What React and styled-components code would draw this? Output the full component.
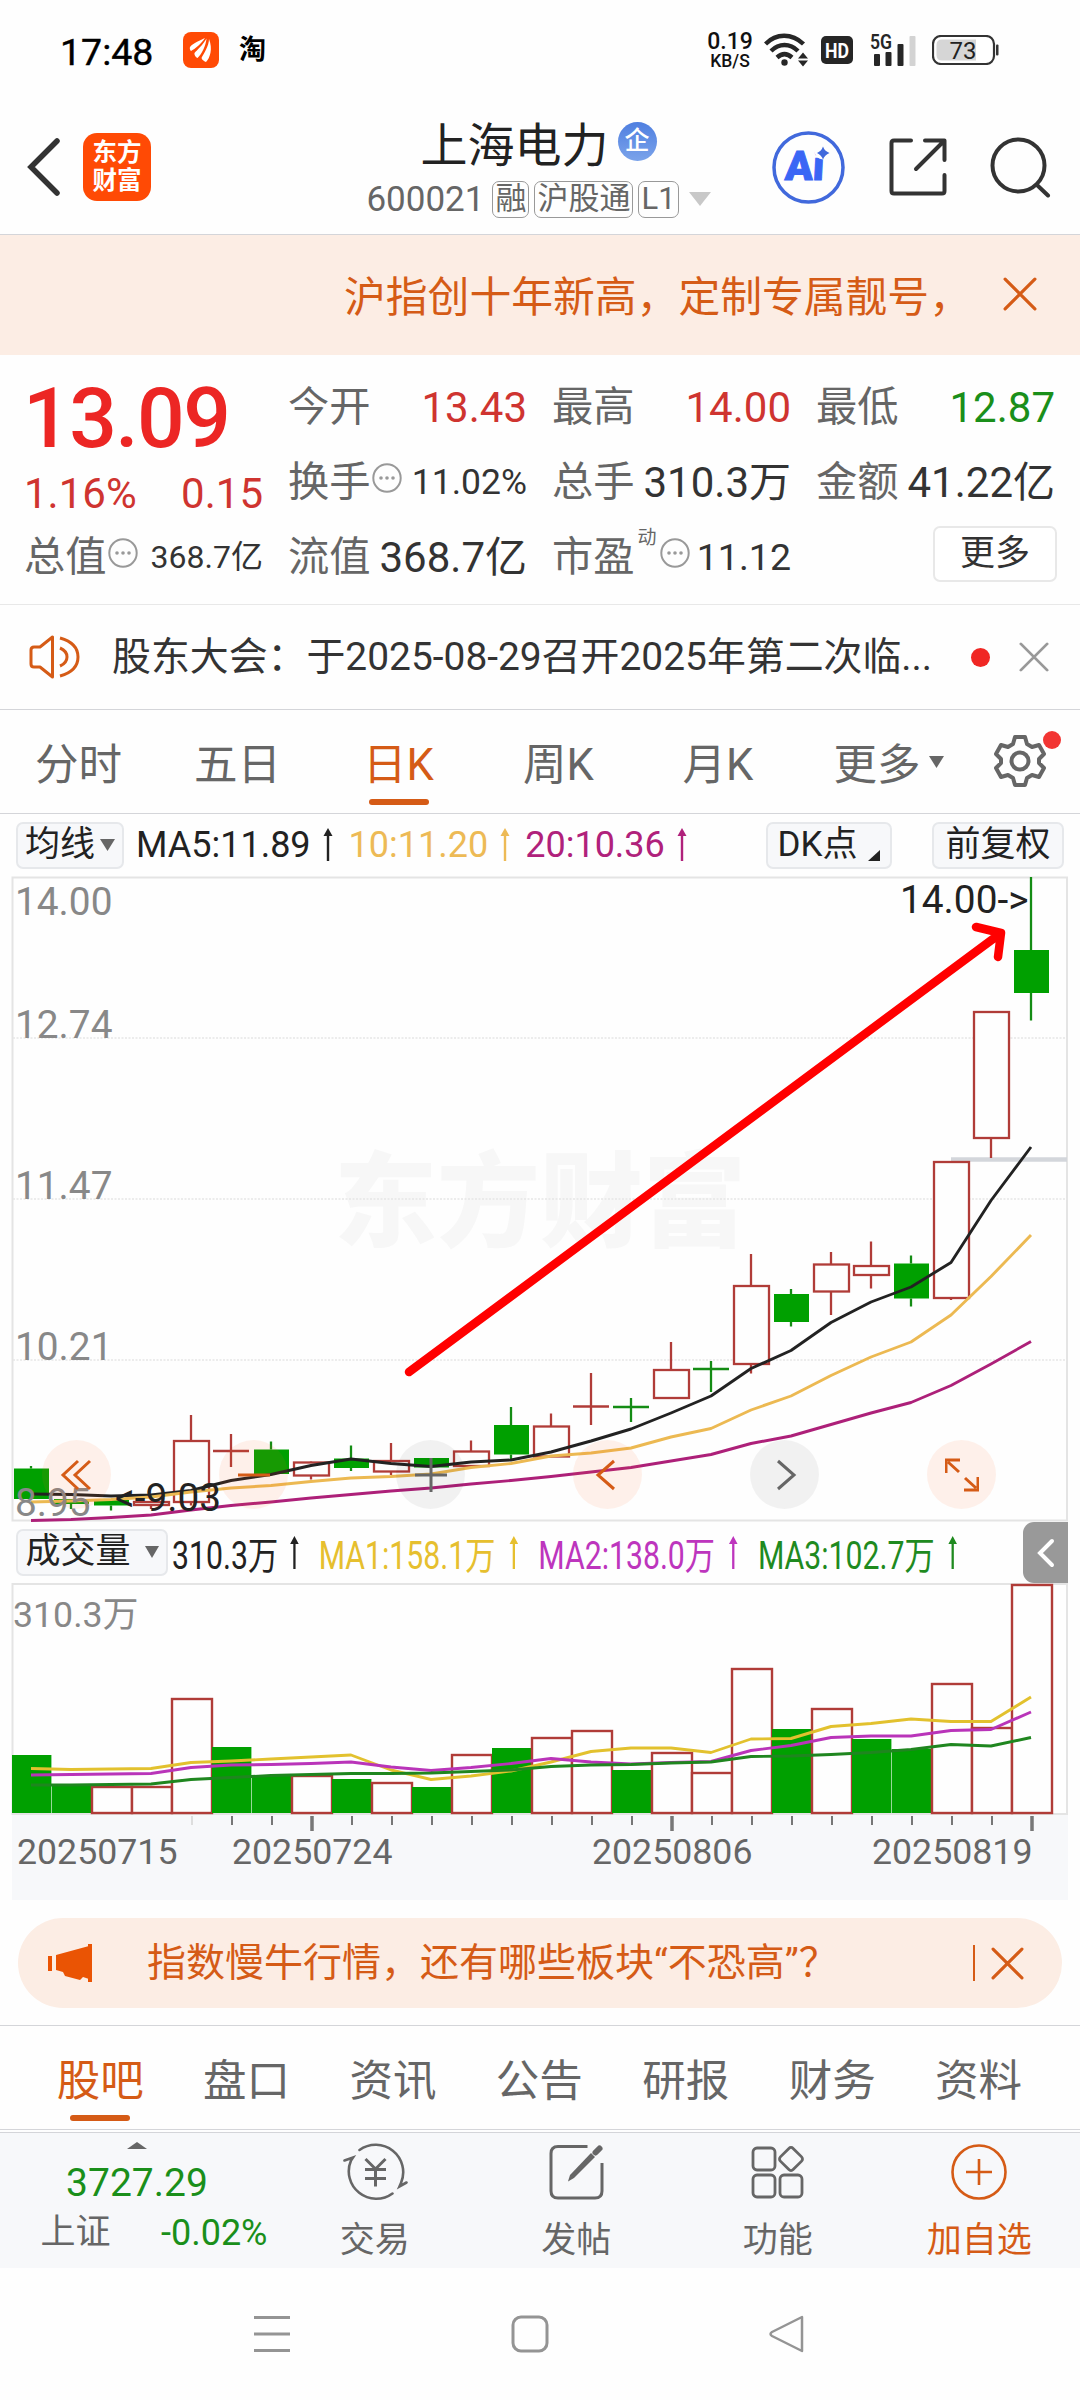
import React from 'react';
import styled, { createGlobalStyle, css } from 'styled-components';

const GlobalStyle = createGlobalStyle`
  * {
    box-sizing: border-box;
  }
  body {
    margin: 0;
    background: #fefefe;
    font-family: Roboto, 'Noto Sans CJK SC', sans-serif;
    color: #333;
    -webkit-font-smoothing: antialiased;
  }
  svg {
    display: block;
    flex: none;
  }
`;

const colors = {
  orange: '#d55b16',
  red: '#cf3430',
  green: '#1a8f1a',
  fill: '#00a000',
  border: '#b03c38',
  grey: '#666',
  dark: '#333',
  peach: '#fcede4',
  panel: '#f7f8fa',
  line: '#d4d5d9'
};

const Page = styled.main`
  width: 1080px;
  height: 2400px;
  display: flex;
  flex-direction: column;
  overflow: hidden;
`;

/* status bar */

const StatusBar = styled.div`
  height: 100px;
  padding: 0 81px 0 60px;
  display: flex;
  align-items: center;
`;

const Clock = styled.span`
  width: 123px;
  font-size: 37.5px;
  line-height: 40px;
  padding-top: 3px;
  font-weight: 400;
  color: #000;
  -webkit-text-stroke: 0.4px #000;
`;

const TaoMark = styled.span`
  margin-left: 20px;
  margin-right: auto;
  font-size: 27px;
  line-height: 36px;
  font-weight: 700;
  color: #000;
`;

const NetSpeed = styled.div`
  display: flex;
  flex-direction: column;
  align-items: center;
  width: 46px;
  margin-right: 11px;
  padding-top: 2px;
  color: #111;
  font-weight: 500;
  font-size: 23px;
  line-height: 20px;
  > small {
    font-size: 17.5px;
    line-height: 18px;
  }
`;

/* header */

const Header = styled.header`
  height: 135px;
  padding: 0 29px 0 26px;
  display: grid;
  grid-template-columns: 1fr auto 1fr;
  align-items: center;
  border-bottom: 1px solid ${colors.line};
`;

const HeaderLeft = styled.div`
  display: flex;
  align-items: center;
  gap: 23px;
`;

const HeaderRight = styled.div`
  display: flex;
  align-items: center;
  justify-content: flex-end;
  gap: 43.5px;
`;

const BrandLogo = styled.div`
  width: 68px;
  height: 68px;
  border-radius: 14px;
  background: #ff4a05;
  color: #fff;
  font-size: 24.5px;
  line-height: 28px;
  font-weight: 700;
  display: flex;
  flex-direction: column;
  align-items: center;
  justify-content: center;
`;

const TitleBlock = styled.div`
  padding-top: 8px;
  display: flex;
  flex-direction: column;
  align-items: center;
`;

const Title = styled.h1`
  margin: 0;
  height: 56px;
  display: flex;
  align-items: center;
  gap: 9px;
  font-size: 47px;
  font-weight: 400;
  color: #222;
`;

const Badge = styled.span`
  width: 39px;
  height: 39px;
  border-radius: 50%;
  background: linear-gradient(#4f7fe0, #7ba3ea);
  color: #fff;
  font-size: 25px;
  line-height: 37px;
  font-weight: 500;
  text-align: center;
`;

const SubTitle = styled.div`
  height: 60px;
  display: flex;
  align-items: center;
  gap: 5px;
  font-size: 35px;
  color: ${colors.grey};
  > svg {
    margin-left: 5px;
  }
`;

const Tag = styled.span`
  height: 37px;
  padding: 0 2px;
  border: 1.5px solid #999;
  border-radius: 7px;
  font-size: 31px;
  line-height: 33px;
  &:first-of-type {
    margin-left: 3px;
  }
`;

/* promo strips */

const Promo = styled.div`
  height: 120px;
  padding: 0 43px 2px 344px;
  display: flex;
  align-items: center;
  justify-content: space-between;
  background: ${colors.peach};
  color: ${colors.orange};
  font-size: 41.8px;
  white-space: nowrap;
`;

const PromoText = styled.span`
  width: 630px;
`;

const PillPromo = styled.div`
  height: 90px;
  margin: 17px 18px 17px;
  padding: 0 38px 0 29px;
  display: flex;
  align-items: center;
  border-radius: 45px;
  background: ${colors.peach};
  color: ${colors.orange};
  font-size: 39px;
  white-space: nowrap;
`;

const PillText = styled.span`
  flex: 1;
  margin-left: 53px;
  line-height: 50px;
`;

const PillDivider = styled.span`
  width: 2px;
  height: 36px;
  margin-right: 16px;
  background: ${colors.orange};
`;

/* quote */

const Quote = styled.section`
  height: 250px;
  padding: 15px 25px 0 24px;
  display: grid;
  grid-template-columns: repeat(4, 239px);
  grid-template-rows: 75px 75px 75px;
  column-gap: 25px;
  border-bottom: 1px solid #e8e8e8;
`;

const PriceBlock = styled.div`
  grid-row: 1 / span 2;
  padding-top: 1px;
  display: flex;
  flex-direction: column;
`;

const Price = styled.strong`
  height: 96px;
  margin-left: -1px;
  font-size: 84px;
  line-height: 96px;
  font-weight: 500;
  letter-spacing: -1.6px;
  color: #ec2624;
`;

const PriceChange = styled.div`
  display: flex;
  justify-content: space-between;
  font-size: 42px;
  line-height: 54px;
  color: ${colors.red};
`;

const Metric = styled.div`
  display: flex;
  align-items: center;
  height: 75px;
  font-size: 41.3px;
  line-height: 75px;
  white-space: nowrap;
  color: ${colors.grey};
  > svg {
    margin: 0 0 9px 1px;
  }
`;

const MetricValue = styled.span`
  margin-left: auto;
  font-size: ${({ $size }) => $size || 42}px;
  color: ${({ $color }) => $color || colors.dark};
`;

const Dynamic = styled.sup`
  align-self: flex-start;
  width: 19px;
  margin: 6px 2px 0 3px;
  font-size: 19px;
  line-height: 24px;
`;

const MoreButton = styled.button`
  justify-self: end;
  align-self: center;
  width: 124px;
  height: 56px;
  margin: 0 -2px 7px 0;
  padding: 0 0 1px;
  border: 2px solid #e8e8e8;
  border-radius: 7px;
  background: #fff;
  color: ${colors.dark};
  font: inherit;
  font-size: 35px;
  line-height: 48px;
`;

/* notice */

const Notice = styled.section`
  height: 105px;
  padding: 0 31px 0 29px;
  display: flex;
  align-items: center;
  border-bottom: 1px solid ${colors.line};
  font-size: 38.9px;
`;

const NoticeText = styled.span`
  width: 860px;
  margin-left: 31px;
  line-height: 60px;
  white-space: nowrap;
`;

const RedDot = styled.i`
  width: 19px;
  height: 19px;
  margin-right: 29px;
  border-radius: 50%;
  background: #f02724;
`;

/* tabs */

const PeriodTabs = styled.nav`
  height: 104px;
  display: flex;
  border-bottom: 1px solid ${colors.line};
`;

const InfoTabs = styled.nav`
  height: 105px;
  padding: 0 27px 0 27px;
  display: flex;
  border-top: 1px solid ${colors.line};
  border-bottom: 1px solid ${colors.line};
`;

const Tab = styled.a`
  position: relative;
  width: ${({ $width }) => $width}px;
  display: flex;
  align-items: center;
  justify-content: center;
  gap: 8px;
  font-size: 43.5px;
  color: ${colors.grey};
  ${({ $active }) =>
    $active &&
    css`
      color: ${colors.orange};
      &::after {
        content: '';
        position: absolute;
        bottom: 8px;
        width: 60px;
        height: 6px;
        border-radius: 3px;
        background: ${colors.orange};
      }
    `}
`;

const GearButton = styled.div`
  position: relative;
  margin-left: 14px;
  padding-top: 24px;
`;

const GearDot = styled.i`
  position: absolute;
  top: 21px;
  right: -14px;
  width: 18px;
  height: 18px;
  border-radius: 50%;
  background: #f23533;
`;

/* charts */

const Toolbar = styled.div`
  height: ${({ $height }) => $height}px;
  padding-left: 16px;
  padding-right: ${({ $right }) => $right}px;
  display: flex;
  align-items: center;
  font-size: 35px;
  white-space: nowrap;
`;

const Chip = styled.button`
  flex: none;
  width: ${({ $width }) => $width}px;
  height: 47px;
  padding: 0 0 1px;
  display: flex;
  align-items: center;
  justify-content: center;
  gap: ${({ $gap }) => $gap || 0}px;
  border: 2px solid #e6e8eb;
  border-radius: 7px;
  background: ${colors.panel};
  color: #222;
  font: inherit;
  line-height: 40px;
  & + & {
    margin-left: 40px;
  }
`;

const MaLegend = styled.div`
  flex: 1;
  margin-left: 12px;
  display: flex;
  align-items: center;
  font-size: 36px;
`;

const VolumeLegend = styled.div`
  flex: 1;
  min-width: 0;
  margin-left: 4px;
  display: flex;
  align-items: center;
  font-size: 38px;
  transform: scaleX(0.795);
  transform-origin: left center;
`;

const LegendItem = styled.span`
  flex: none;
  display: inline-flex;
  align-items: center;
  gap: ${({ $gap }) => $gap}px;
  margin-right: ${({ $after }) => $after}px;
  color: ${({ $color }) => $color};
`;

const Collapse = styled.div`
  flex: none;
  width: 45px;
  height: 61px;
  display: flex;
  align-items: center;
  justify-content: center;
  border-radius: 11px 0 0 11px;
  background: #999;
`;

const ChartPanel = styled.div`
  position: relative;
  height: ${({ $height }) => $height}px;
`;

const FloatingTools = styled.div`
  position: absolute;
  left: 42px;
  right: 84px;
  bottom: 13px;
  display: flex;
  justify-content: space-between;
`;

const ToolButton = styled.div`
  width: 69px;
  height: 69px;
  display: flex;
  align-items: center;
  justify-content: center;
  border-radius: 50%;
  background: ${({ $muted }) => ($muted ? 'rgba(0, 0, 0, 0.05)' : 'rgba(255, 100, 30, 0.09)')};
  color: ${({ $muted }) => ($muted ? '#666' : colors.orange)};
`;

/* bottom */

const BottomBar = styled.footer`
  height: 136px;
  margin-top: 2px;
  display: grid;
  grid-template-columns: 274px repeat(4, 201.5px);
  border-top: 1px solid ${colors.line};
  background: ${colors.panel};
  color: ${colors.grey};
  font-size: 35px;
`;

const IndexBox = styled.div`
  padding-top: 9px;
  display: flex;
  flex-direction: column;
  align-items: center;
`;

const IndexValue = styled.span`
  margin-top: 10px;
  font-size: 39px;
  line-height: 48px;
  color: ${colors.green};
`;

const IndexRow = styled.div`
  width: 227px;
  margin-left: 34px;
  display: flex;
  align-items: center;
  justify-content: space-between;
  line-height: 52px;
  > b {
    font-weight: 400;
    font-size: 36px;
    color: ${colors.green};
  }
`;

const Action = styled.div`
  padding-top: 10px;
  display: flex;
  flex-direction: column;
  align-items: center;
  color: ${({ $accent }) => ($accent ? colors.orange : colors.grey)};
  > span {
    margin-top: 14px;
    line-height: 52px;
  }
`;

const SystemNav = styled.div`
  height: 132px;
  padding: 0 273px 0 252px;
  display: flex;
  align-items: center;
  justify-content: space-between;
`;

/* [kind, high, open/close top, open/close bottom, low] in panel pixels */
const candles = [
  ['g', 590, 592.5, 623, 623],
  ['g', 623, 623, 628, 633],
  ['g', 624, 624, 629.5, 634.5],
  ['r', 625, 626, 629, 633],
  ['r', 539, 565, 626, 629.5],
  ['r', 558, 575, 575, 591],
  ['g', 565.5, 573.5, 598, 598],
  ['r', 585.5, 586.5, 599.5, 603.5],
  ['g', 569.5, 582.5, 592, 595],
  ['r', 567, 585, 595.5, 599],
  ['g', 582, 582, 591.5, 592],
  ['r', 564.5, 575.5, 590, 590],
  ['g', 531, 549, 578.5, 584.5],
  ['r', 537.5, 550.5, 580.5, 580.5],
  ['r', 497, 530.5, 530.5, 549],
  ['g', 522, 531, 532, 546],
  ['r', 466, 494, 522, 522],
  ['g', 485, 493, 494, 516],
  ['r', 378, 410, 488, 497.5],
  ['g', 413, 418, 446, 450.5],
  ['r', 376, 388.5, 415.5, 439],
  ['r', 365.5, 390, 399, 412.5],
  ['g', 379.5, 387.5, 422.5, 430.5],
  ['r', 286, 286, 422, 424],
  ['r', 136, 136, 262, 282],
  ['g', 1, 74, 117, 144.5]
];

const ma5 = [618, 618.5, 620, 619, 614.5, 604.5, 598.5, 589.5, 583, 587.5, 590.5, 586, 584, 576, 565, 553, 537, 520, 492.5, 474.5, 446.5, 426, 411, 386.5, 324.5, 271];
const ma10 = [626, 625, 623.5, 621, 616, 612, 609.5, 605.5, 602, 600.5, 598, 591.5, 587.5, 580, 577, 572, 561, 552.5, 534, 520, 499.5, 481, 466, 439, 400.5, 359];
const ma20 = [644.5, 643.5, 641.5, 639, 634, 629.5, 626, 622, 618.5, 615, 612, 608, 604.5, 600.5, 596, 591.5, 585, 578.5, 567.5, 560, 548.5, 537, 526.5, 509.5, 488, 465.5];

const volumeKinds = 'ggrrrggrgrgrgrrgrrrgrggrrr';
const volumeTops = [172, 202, 204, 204, 116, 164, 193, 193, 196, 200, 204, 172, 165, 155, 148, 187, 170, 190, 86, 146, 126, 156, 166, 101, 145, 2];
const vol1 = [185.5, 186.5, 186, 185.5, 179.5, 178, 176, 174, 172, 187, 196.5, 193, 188, 179, 168.5, 165, 165, 169.5, 156, 155.5, 143.5, 140.5, 136, 138.5, 138.5, 114];
const vol2 = [192, 191.5, 191, 190.5, 184.5, 182, 181.5, 180.5, 179, 184, 187.5, 184.5, 180.5, 175.5, 179, 181, 179.5, 178.5, 167.5, 162.5, 154.5, 153, 153, 147.5, 146.5, 129];
const vol3 = [202, 202, 201.5, 201, 196.5, 194.5, 192.5, 191.5, 190.5, 190.5, 190, 188.5, 187, 183.5, 182, 181.5, 180, 179, 173.5, 173, 171.5, 169.5, 166.5, 161.5, 163, 154.5];

const centerX = i => 31 + 40 * i;
const toPoints = values => values.map((y, i) => `${centerX(i)},${y}`).join(' ');

const Series = ({ values, color, width = 2.9 }) => (
  <polyline points={toPoints(values)} fill="none" stroke={color} strokeWidth={width} strokeLinejoin="round" />
);

const Candle = ({ data: [kind, high, top, bottom, low], x }) => {
  const up = kind === 'r';
  const color = up ? colors.border : '#148c14';
  const flat = bottom - top < 2;
  return (
    <g stroke={color} strokeWidth="2.3">
      {high < top && <line x1={x} x2={x} y1={high} y2={top} />}
      {low > bottom && <line x1={x} x2={x} y1={bottom} y2={low} />}
      {flat && <line x1={x - 18} x2={x + 18} y1={top} y2={top} strokeWidth="2.6" />}
      {!flat && up && <rect x={x - 17} y={top} width="35" height={bottom - top} fill="#fefefe" />}
      {!flat && !up && <rect x={x - 17} y={top} width="35" height={bottom - top} fill={colors.fill} stroke="none" />}
    </g>
  );
};

const Close = ({ size = 32, color = colors.orange, width = 3 }) => (
  <svg width={size} height={size} viewBox="0 0 32 32" stroke={color} strokeWidth={width} strokeLinecap="round">
    <path d="M2 2L30 30M30 2L2 30" />
  </svg>
);

const Caret = ({ width, height, color = '#666', up }) => (
  <svg width={width} height={height} viewBox="0 0 10 10" preserveAspectRatio="none" fill={color}>
    <path d={up ? 'M0 10H10L5 0Z' : 'M0 0H10L5 10Z'} />
  </svg>
);

const UpArrow = ({ stretch = 1 }) => (
  <svg width={10 * stretch} height="34" viewBox="0 0 10 34" preserveAspectRatio="none" fill="currentColor">
    <path d="M5 0L9.5 8H6.2V33H3.8V8H0.5Z" />
  </svg>
);

const MoreDots = () => (
  <svg width="30" height="30" viewBox="0 0 30 30" fill="#999">
    <circle cx="15" cy="15" r="13.7" fill="none" stroke="#999" strokeWidth="2" />
    <circle cx="9" cy="15" r="1.8" />
    <circle cx="15" cy="15" r="1.8" />
    <circle cx="21" cy="15" r="1.8" />
  </svg>
);

const AppIcon = () => (
  <svg width="36" height="36" viewBox="0 0 36 36" fill="#fff">
    <rect width="36" height="36" rx="8" fill="#ff4a05" />
    <path d="M22 6C18 8 10 11 7 15C6.500 16 7 18.500 8 19C12 17 18 12 22 6Z" />
    <path d="M23.500 6.500C20 13 14 18 11.500 21C11 23 13 25.500 14.500 26C19 22 23 13 23.500 6.500Z" />
    <path d="M26 7C26 14 21 21 18.500 26C19 28 21.500 29.500 23 30C27 26 30 17 26 7Z" />
  </svg>
);

const WifiIcon = () => (
  <svg width="45" height="34" viewBox="0 0 45 34" fill="none" stroke="#262626" strokeWidth="4.4">
    <path d="M1.500 11C12 0 28 0 39.500 11" />
    <path d="M7 18C15 10 26 10 34 18" />
    <path d="M13 24.500C18 20 23 20 28 24.500" />
    <circle cx="20.500" cy="29.500" r="3.200" fill="#262626" stroke="none" />
    <path d="M34 25.500L39 19.500L44 25.500ZM34 27.500L39 33.500L44 27.500Z" fill="#262626" stroke="none" />
  </svg>
);

const HdIcon = () => (
  <svg width="32" height="28" viewBox="0 0 32 28">
    <rect width="32" height="28" rx="5" fill="#262626" />
    <text x="16" y="21.500" fontSize="20.500" fontWeight="700" textAnchor="middle" textLength="24" lengthAdjust="spacingAndGlyphs" fill="#fff">HD</text>
  </svg>
);

const SignalIcon = () => (
  <svg width="46" height="44" viewBox="0 -4 46 44" fill="#262626">
    <text x="0" y="16.500" fontSize="20" fontWeight="600" textLength="22" lengthAdjust="spacingAndGlyphs">5G</text>
    <rect x="4" y="22" width="6" height="12" rx="1" />
    <rect x="15.500" y="20" width="6" height="14" rx="1" />
    <rect x="27.500" y="12" width="6" height="22" rx="1" />
    <rect x="39.500" y="4" width="6" height="30" rx="1" fill="#d3d3d3" />
  </svg>
);

const BatteryIcon = () => (
  <svg width="67" height="30" viewBox="0 0 67 30">
    <rect x="1" y="1" width="61" height="28" rx="8" fill="#fff" stroke="#333" strokeWidth="2.200" />
    <path d="M10 4.500H44V25.500H10Q4.500 25.500 4.500 20V10Q4.500 4.500 10 4.500Z" fill="#d6d6d6" />
    <rect x="64" y="9.500" width="2.500" height="11" rx="1" fill="#333" />
    <text x="31" y="23.500" fontSize="24" textAnchor="middle" fill="#222">73</text>
  </svg>
);

const AiIcon = () => (
  <svg width="73" height="73" viewBox="0 0 73 73">
    <circle cx="36.500" cy="36.500" r="34.500" fill="none" stroke="#4169dc" strokeWidth="3.500" />
    <text x="12" y="49.500" fontSize="41" fontWeight="900" fill="#3a66f5" stroke="#3a66f5" strokeWidth="1" transform="skewX(-3) translate(3 0)">Ai</text>
    <circle cx="51" cy="20" r="8.500" fill="#fefefe" />
    <path d="M51 15.500Q52.500 20 57.500 22Q52.500 24 51 28.500Q49.500 24 45 22Q49.500 20 51 15.500Z" fill="#4169dc" />
  </svg>
);

const ShareIcon = () => (
  <svg width="58" height="58" viewBox="0 0 58 58" fill="none" stroke="#333" strokeWidth="4" strokeLinecap="round" strokeLinejoin="round">
    <path d="M22 2.500H5Q2.500 2.500 2.500 5V53Q2.500 55.500 5 55.500H53Q55.500 55.500 55.500 53V37" />
    <path d="M36 2.500H55.500V22M54 4L27 31" />
  </svg>
);

const SearchIcon = () => (
  <svg width="61" height="61" viewBox="0 0 61 61" fill="none" stroke="#333" strokeWidth="4" strokeLinecap="round">
    <circle cx="28.500" cy="28.500" r="26" />
    <path d="M47 48L58 58.500" />
  </svg>
);

const SpeakerIcon = () => (
  <svg width="52" height="44" viewBox="0 0 52 44" fill="none" stroke={colors.orange} strokeWidth="3">
    <path d="M23.500 2V42L11 32H5Q2 32 2 29V15Q2 12 5 12H11Z" strokeLinejoin="round" />
    <path d="M31 13Q38 16 38 22Q38 28 31 31M31 3Q49 8 49 22Q49 36 31 41" />
  </svg>
);

const GearIcon = () => (
  <svg width="54" height="54" viewBox="0 0 54 54" fill="none" stroke="#666" strokeWidth="4" strokeLinejoin="round">
    <path d="M22 3H32L34 10L39 13L46 11L51 20L46 25V29L51 34L46 43L39 41L34 44L32 51H22L20 44L15 41L8 43L3 34L8 29V25L3 20L8 11L15 13L20 10Z" />
    <circle cx="27" cy="27" r="8.500" />
  </svg>
);

const MegaphoneIcon = () => (
  <svg width="47" height="40" viewBox="0 0 47 40" fill="#ea5404">
    <rect x="1" y="13" width="4" height="15" />
    <path d="M9 12L42 3V36L36 34L33 37L18 33L16 29L9 27Z" />
    <rect x="41" y="1" width="4" height="38" />
  </svg>
);

const TradeIcon = () => (
  <svg width="66" height="58" viewBox="0 0 66 58" fill="none" stroke="currentColor" strokeWidth="2.600" strokeLinecap="round">
    <path d="M17.500 7A27.500 27.500 0 0 1 59 40L57.500 43.500L64.500 39.500M50.500 50.500A27.500 27.500 0 0 1 9 17.500L11 14.500L2.500 17.500" />
    <path d="M23.500 16L33.500 26L43.500 16M23 26.500H44M23 35.500H44M33.500 26V43.500" strokeLinecap="butt" strokeWidth="3" />
  </svg>
);

const PostIcon = () => (
  <svg width="55" height="58" viewBox="0 0 55 58" fill="none" stroke="currentColor" strokeWidth="3">
    <path d="M38.500 3.500H9Q2 3.500 2 10.500V48Q2 55 9 55H46Q53 55 53 48V20" />
    <path d="M19 38.500L21 32L42 10L46 14L25 35Z" fill="currentColor" stroke="none" />
    <path d="M46.500 9.500L50.500 5.500" strokeWidth="6" strokeLinecap="round" />
  </svg>
);

const GridIcon = () => (
  <svg width="54" height="58" viewBox="0 0 54 58" fill="none" stroke="currentColor" strokeWidth="2.800">
    <rect x="2" y="5" width="22" height="22" rx="4" />
    <rect x="31" y="7" width="18" height="18" rx="3" transform="rotate(45 40 16)" />
    <rect x="2" y="32" width="22" height="22" rx="4" />
    <rect x="29" y="32" width="22" height="22" rx="4" />
  </svg>
);

const AddIcon = () => (
  <svg width="58" height="58" viewBox="0 0 58 58" fill="none" stroke="currentColor" strokeWidth="2.600">
    <circle cx="29" cy="29" r="26.500" />
    <path d="M29 16V42M16 29H42" />
  </svg>
);

const toolPaths = [
  'M18 3L3 17L18 31M30 3L15 17L30 31',
  'M1 17H33',
  'M17 0V34M1 17H33',
  'M23 3L7 17L23 31',
  'M10 3L26 17L10 31',
  'M1 15V2H15M3 4L14 14M33 19V32H19M31 30L20 20'
];

const PriceChart = () => (
  <ChartPanel $height={646}>
    <svg width="1080" height="646" viewBox="0 0 1080 646">
      <text x="334" y="363" fontSize="103" fontWeight="900" fill="#f7f7f7">东方财富</text>
      <path d="M12.500 1.500H1067V644.500H12.500Z" fill="none" stroke="#e4e4e4" strokeWidth="2" />
      <path d="M13 162H1067M13 323H1067M13 484H1067" stroke="#e6e6e6" strokeWidth="1.500" strokeDasharray="2 1.500" />
      <path d="M951 283.500H1067" stroke="#d3d6db" strokeWidth="4.500" />
      {candles.map((c, i) => (
        <Candle key={i} data={c} x={centerX(i)} />
      ))}
      <Series values={ma5} color="#222" />
      <Series values={ma10} color="#ecb952" />
      <Series values={ma20} color="#ad2079" />
      <g fontSize="38.800" fill="#888">
        <text x="15" y="38.500">14.00</text>
        <text x="15" y="161.500">12.74</text>
        <text x="15" y="322.500">11.47</text>
        <text x="15" y="483.500">10.21</text>
        <text x="15" y="640">8.95</text>
      </g>
      <g fontSize="38.800" fill="#222">
        <text x="900" y="36.500">14.00-&gt;</text>
        <text x="115" y="634.500">&lt;-9.03</text>
      </g>
      <path d="M409 496L1001 57M976 51L1001 57L998 81" fill="none" stroke="#f00" strokeWidth="8.500" strokeLinecap="round" strokeLinejoin="round" />
    </svg>
    <FloatingTools>
      {toolPaths.map((d, i) => (
        <ToolButton key={d} $muted={i === 2 || i === 4}>
          <svg width="34" height="34" viewBox="0 0 34 34" fill="none" stroke="currentColor" strokeWidth="3">
            <path d={d} />
          </svg>
        </ToolButton>
      ))}
    </FloatingTools>
  </ChartPanel>
);

const VolumeChart = () => (
  <ChartPanel $height={318}>
    <svg width="1080" height="318" viewBox="0 0 1080 318">
      <path d="M12.500 231V1H1067V231Z" fill="none" stroke="#e4e4e4" strokeWidth="2" />
      <rect x="12" y="232" width="1056" height="85" fill={colors.panel} />
      {volumeTops.map((top, i) =>
        volumeKinds[i] === 'r' ? (
          <rect key={i} x={12 + 40 * i} y={top} width="40" height={230 - top} fill="#fefefe" stroke={colors.border} strokeWidth="2.400" />
        ) : (
          <rect key={i} x={12 + 40 * i} y={top} width="39.400" height={230 - top} fill={colors.fill} />
        )
      )}
      <Series values={vol1} color="#e2c12e" />
      <Series values={vol2} color="#b934b9" />
      <Series values={vol3} color="#1f861f" />
      {volumeTops.map((_, i) => {
        const major = i === 7 || i === 16 || i === 25;
        return (
          i > 3 && (
            <line
              key={i}
              x1={centerX(i) + 1}
              x2={centerX(i) + 1}
              y1="233"
              y2={major ? 248 : 242}
              stroke={i === 4 ? '#ddd' : '#777'}
              strokeWidth={major ? 3.5 : 2}
            />
          )
        );
      })}
      <text x="13" y="43.500" fontSize="35.700" fill="#888">310.3万</text>
      <g fontSize="35.700" fill="#666">
        <text x="17" y="280.500">20250715</text>
        <text x="232" y="280.500">20250724</text>
        <text x="592" y="280.500">20250806</text>
        <text x="872" y="280.500">20250819</text>
      </g>
    </svg>
  </ChartPanel>
);

const App = () => (
  <Page>
    <GlobalStyle />
    <StatusBar>
      <Clock>17:48</Clock>
      <AppIcon />
      <TaoMark>淘</TaoMark>
      <NetSpeed>
        0.19
        <small>KB/S</small>
      </NetSpeed>
      <WifiIcon />
      <svg width="12" height="1" />
      <HdIcon />
      <svg width="17" height="1" />
      <SignalIcon />
      <svg width="16" height="1" />
      <BatteryIcon />
    </StatusBar>

    <Header>
      <HeaderLeft>
        <svg width="34" height="58" viewBox="0 0 34 58" fill="none" stroke="#333" strokeWidth="5.500">
          <path d="M31 3L5 29L31 55" strokeLinecap="round" />
        </svg>
        <BrandLogo>
          <span>东方</span>
          <span>财富</span>
        </BrandLogo>
      </HeaderLeft>
      <TitleBlock>
        <Title>
          上海电力<Badge>企</Badge>
        </Title>
        <SubTitle>
          600021
          <Tag>融</Tag>
          <Tag>沪股通</Tag>
          <Tag>L1</Tag>
          <Caret width={22} height={14} color="#c8c8c8" />
        </SubTitle>
      </TitleBlock>
      <HeaderRight>
        <AiIcon />
        <ShareIcon />
        <SearchIcon />
      </HeaderRight>
    </Header>

    <Promo>
      <PromoText>沪指创十年新高，定制专属靓号，</PromoText>
      <Close size={34} />
    </Promo>

    <Quote>
      <PriceBlock>
        <Price>13.09</Price>
        <PriceChange>
          <span>1.16%</span>
          <span>0.15</span>
        </PriceChange>
      </PriceBlock>
      <Metric>
        今开<MetricValue $color={colors.red}>13.43</MetricValue>
      </Metric>
      <Metric>
        最高<MetricValue $color={colors.red}>14.00</MetricValue>
      </Metric>
      <Metric>
        最低<MetricValue $color={colors.green}>12.87</MetricValue>
      </Metric>
      <Metric>
        换手
        <MoreDots />
        <MetricValue $size={35.5}>11.02%</MetricValue>
      </Metric>
      <Metric>
        总手<MetricValue>310.3万</MetricValue>
      </Metric>
      <Metric>
        金额<MetricValue>41.22亿</MetricValue>
      </Metric>
      <Metric>
        总值
        <MoreDots />
        <MetricValue $size={32}>368.7亿</MetricValue>
      </Metric>
      <Metric>
        流值<MetricValue>368.7亿</MetricValue>
      </Metric>
      <Metric>
        市盈<Dynamic>动</Dynamic>
        <MoreDots />
        <MetricValue $size={37.5}>11.12</MetricValue>
      </Metric>
      <MoreButton>更多</MoreButton>
    </Quote>

    <Notice>
      <SpeakerIcon />
      <NoticeText>股东大会：于2025-08-29召开2025年第二次临...</NoticeText>
      <RedDot />
      <Close size={30} color="#999" />
    </Notice>

    <PeriodTabs>
      <Tab $width={157}>分时</Tab>
      <Tab $width={161}>五日</Tab>
      <Tab $width={161} $active>日K</Tab>
      <Tab $width={159}>周K</Tab>
      <Tab $width={160}>月K</Tab>
      <Tab $width={181}>
        更多
        <Caret width={15} height={12} />
      </Tab>
      <GearButton>
        <GearIcon />
        <GearDot />
      </GearButton>
    </PeriodTabs>

    <Toolbar $height={62} $right={16}>
      <Chip $width={108} $gap={5}>
        均线
        <Caret width={15} height={12} />
      </Chip>
      <MaLegend>
        <LegendItem $color="#222" $gap={12} $after={16}>
          MA5:11.89
          <UpArrow />
        </LegendItem>
        <LegendItem $color="#edba55" $gap={12} $after={15}>
          10:11.20
          <UpArrow />
        </LegendItem>
        <LegendItem $color="#b0217b" $gap={12} $after={0}>
          20:10.36
          <UpArrow />
        </LegendItem>
      </MaLegend>
      <Chip $width={126} $gap={11}>
        DK点
        <svg width="12" height="34" viewBox="0 0 12 34">
          <path d="M12 22V33H0Z" fill="#222" />
        </svg>
      </Chip>
      <Chip $width={132}>前复权</Chip>
    </Toolbar>
    <PriceChart />

    <Toolbar $height={61} $right={12}>
      <Chip $width={152} $gap={14}>
        成交量
        <Caret width={14} height={12} />
      </Chip>
      <VolumeLegend>
        <LegendItem $color="#222" $gap={15} $after={24}>
          310.3万
          <UpArrow stretch={1.2} />
        </LegendItem>
        <LegendItem $color="#e6bf2e" $gap={17} $after={25}>
          MA1:158.1万
          <UpArrow stretch={1.2} />
        </LegendItem>
        <LegendItem $color="#bd35bd" $gap={17} $after={25}>
          MA2:138.0万
          <UpArrow stretch={1.2} />
        </LegendItem>
        <LegendItem $color="#1f8a1f" $gap={17} $after={0}>
          MA3:102.7万
          <UpArrow stretch={1.2} />
        </LegendItem>
      </VolumeLegend>
      <Collapse>
        <svg width="18" height="30" viewBox="0 0 18 30" fill="none" stroke="#fff" strokeWidth="4" strokeLinecap="round">
          <path d="M15 3L3 15L15 27" />
        </svg>
      </Collapse>
    </Toolbar>
    <VolumeChart />

    <PillPromo>
      <MegaphoneIcon />
      <PillText>指数慢牛行情，还有哪些板块“不恐高”？</PillText>
      <PillDivider />
      <Close size={33} />
    </PillPromo>

    <InfoTabs>
      {['股吧', '盘口', '资讯', '公告', '研报', '财务', '资料'].map((label, i) => (
        <Tab key={label} $width={146.4} $active={i === 0}>
          {label}
        </Tab>
      ))}
    </InfoTabs>

    <BottomBar>
      <IndexBox>
        <Caret width={20} height={7} up />
        <IndexValue>3727.29</IndexValue>
        <IndexRow>
          上证<b>-0.02%</b>
        </IndexRow>
      </IndexBox>
      <Action>
        <TradeIcon />
        <span>交易</span>
      </Action>
      <Action>
        <PostIcon />
        <span>发帖</span>
      </Action>
      <Action>
        <GridIcon />
        <span>功能</span>
      </Action>
      <Action $accent>
        <AddIcon />
        <span>加自选</span>
      </Action>
    </BottomBar>

    <SystemNav>
      <svg width="40" height="40" viewBox="0 0 40 40" stroke="#949494" strokeWidth="3">
        <path d="M2 3.500H38M2 20H38M2 36.500H38" />
      </svg>
      <svg width="40" height="40" viewBox="0 0 40 40" fill="none" stroke="#949494" strokeWidth="3">
        <rect x="3" y="3" width="34" height="34" rx="8" />
      </svg>
      <svg width="40" height="40" viewBox="0 0 40 40" fill="none" stroke="#949494" strokeWidth="2.500" strokeLinejoin="round">
        <path d="M35 3V37L5 22Q2 20 5 18Z" />
      </svg>
    </SystemNav>
  </Page>
);

export default App;
